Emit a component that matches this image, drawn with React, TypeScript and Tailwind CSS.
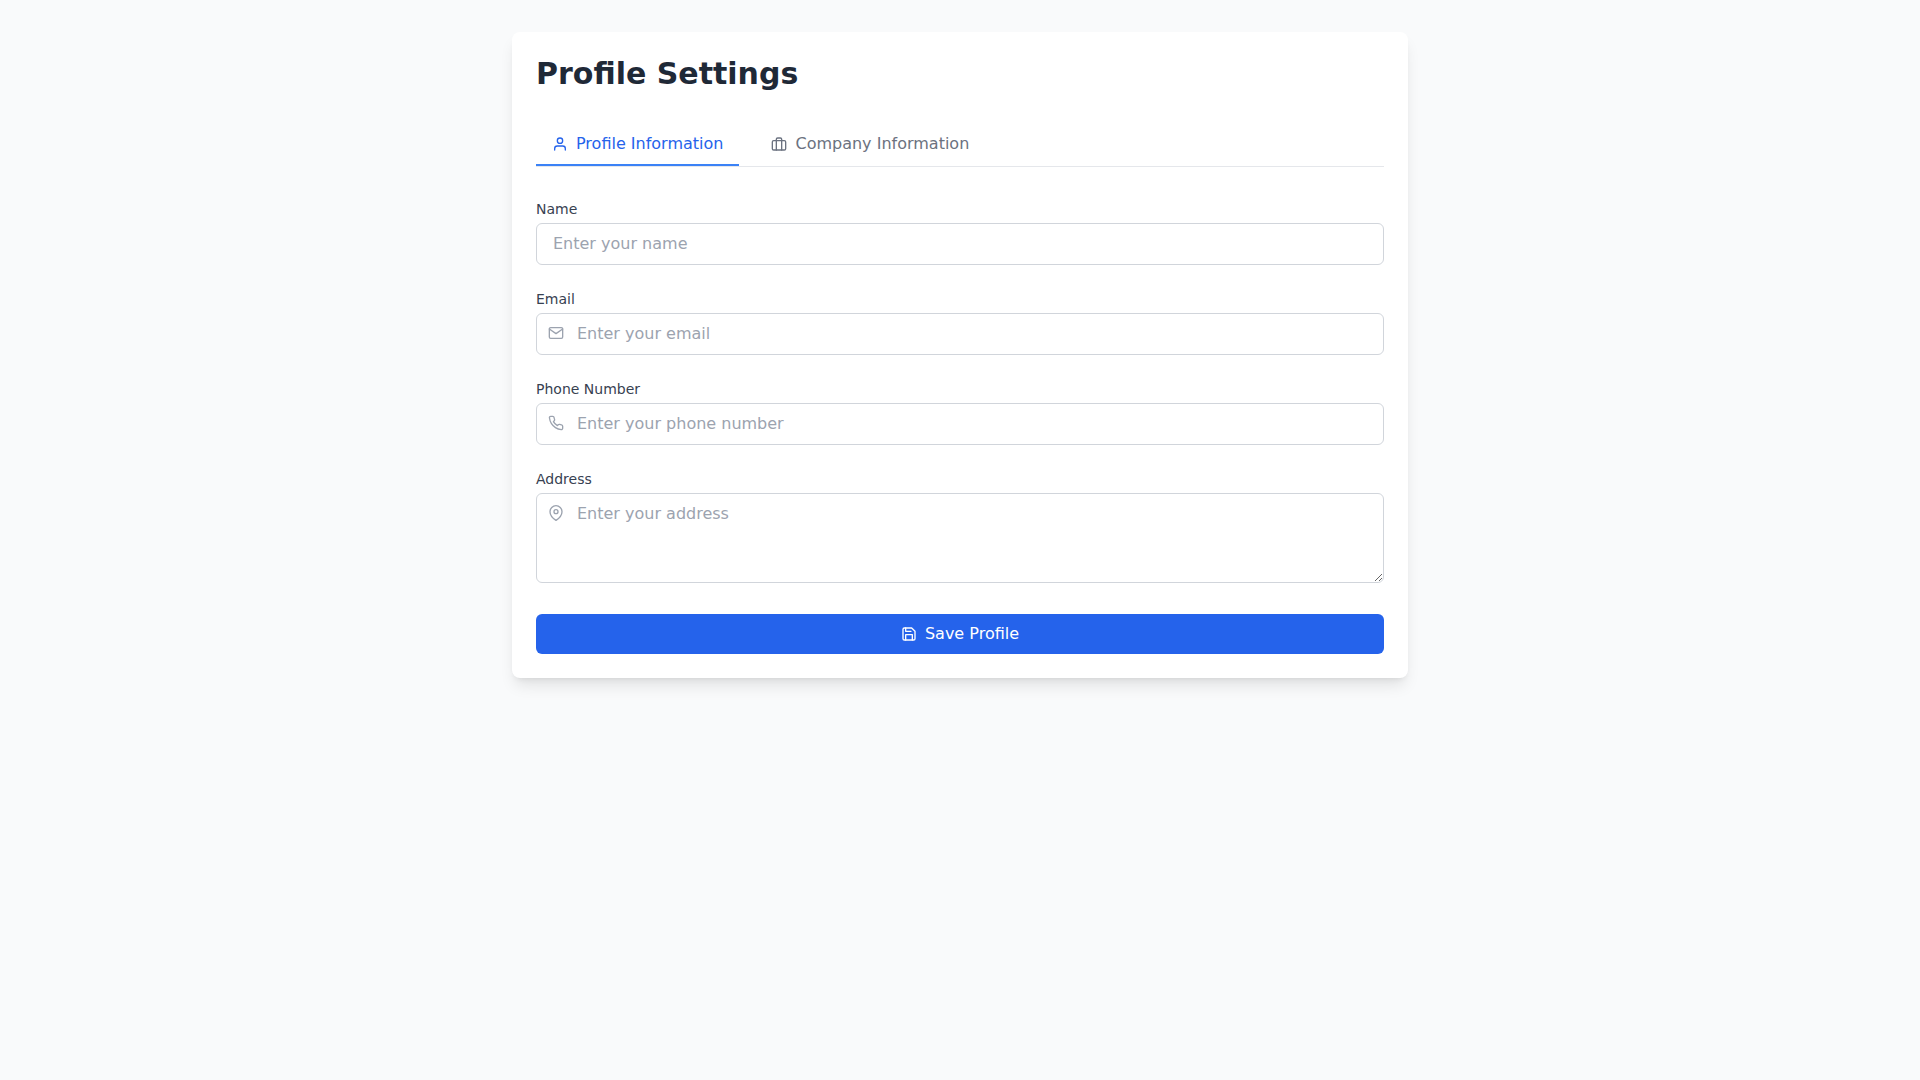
import { useState } from 'react';
import type { ReactNode } from 'react';
import { FiBriefcase, FiMail, FiMapPin, FiPhone, FiSave, FiUser } from 'react-icons/fi';

type Tab = 'profile' | 'company';

interface FieldProps {
  id: string;
  label: string;
  icon?: ReactNode;
  children: ReactNode;
}

function Field({ id, label, icon, children }: FieldProps) {
  return (
    <div>
      <label htmlFor={id} className="block text-sm font-medium text-[#374151] mb-1">
        {label}
      </label>
      <div className="relative">
        {icon && <span className="absolute left-3 top-3 text-[#9ca3af] pointer-events-none">{icon}</span>}
        {children}
      </div>
    </div>
  );
}

const inputClass =
  'w-full py-2 pr-4 bg-white border border-[#d1d5db] rounded-md text-[#1f2937] placeholder:text-[#9ca3af] focus:outline-none focus:border-[#3b82f6]';

export default function App() {
  const [activeTab, setActiveTab] = useState<Tab>('profile');

  const tabClass = (tab: Tab) =>
    `flex items-center gap-2 px-4 py-2 border-b-2 font-medium cursor-pointer ${
      activeTab === tab ? 'border-[#3b82f6] text-[#2563eb]' : 'border-transparent text-[#6b7280]'
    }`;

  return (
    <div className="min-h-screen bg-[#f9fafb] px-4 py-8 font-['DejaVu_Sans',sans-serif]">
      <div className="max-w-4xl mx-auto p-6 bg-white rounded-lg shadow-lg">
        <h1 className="text-3xl font-bold text-[#1f2937] mb-8">Profile Settings</h1>

        <div className="flex gap-4 border-b border-[#e5e7eb] mb-8">
          <button type="button" onClick={() => setActiveTab('profile')} className={tabClass('profile')}>
            <FiUser size={16} />
            Profile Information
          </button>
          <button type="button" onClick={() => setActiveTab('company')} className={tabClass('company')}>
            <FiBriefcase size={16} />
            Company Information
          </button>
        </div>

        {activeTab === 'profile' && (
          <form className="space-y-6" onSubmit={(e) => e.preventDefault()}>
            <Field id="name" label="Name">
              <input id="name" type="text" placeholder="Enter your name" className={`${inputClass} pl-4`} />
            </Field>
            <Field id="email" label="Email" icon={<FiMail size={16} />}>
              <input id="email" type="email" placeholder="Enter your email" className={`${inputClass} pl-10`} />
            </Field>
            <Field id="phone" label="Phone Number" icon={<FiPhone size={16} />}>
              <input id="phone" type="tel" placeholder="Enter your phone number" className={`${inputClass} pl-10`} />
            </Field>
            <Field id="address" label="Address" icon={<FiMapPin size={16} />}>
              <textarea id="address" rows={3} placeholder="Enter your address" className={`${inputClass} pl-10`} />
            </Field>
            <button
              type="submit"
              className="flex items-center justify-center gap-2 w-full px-4 py-2 bg-[#2563eb] text-white font-medium rounded-md hover:bg-[#1d4ed8] transition-colors cursor-pointer"
            >
              <FiSave size={16} />
              Save Profile
            </button>
          </form>
        )}
      </div>
    </div>
  );
}
